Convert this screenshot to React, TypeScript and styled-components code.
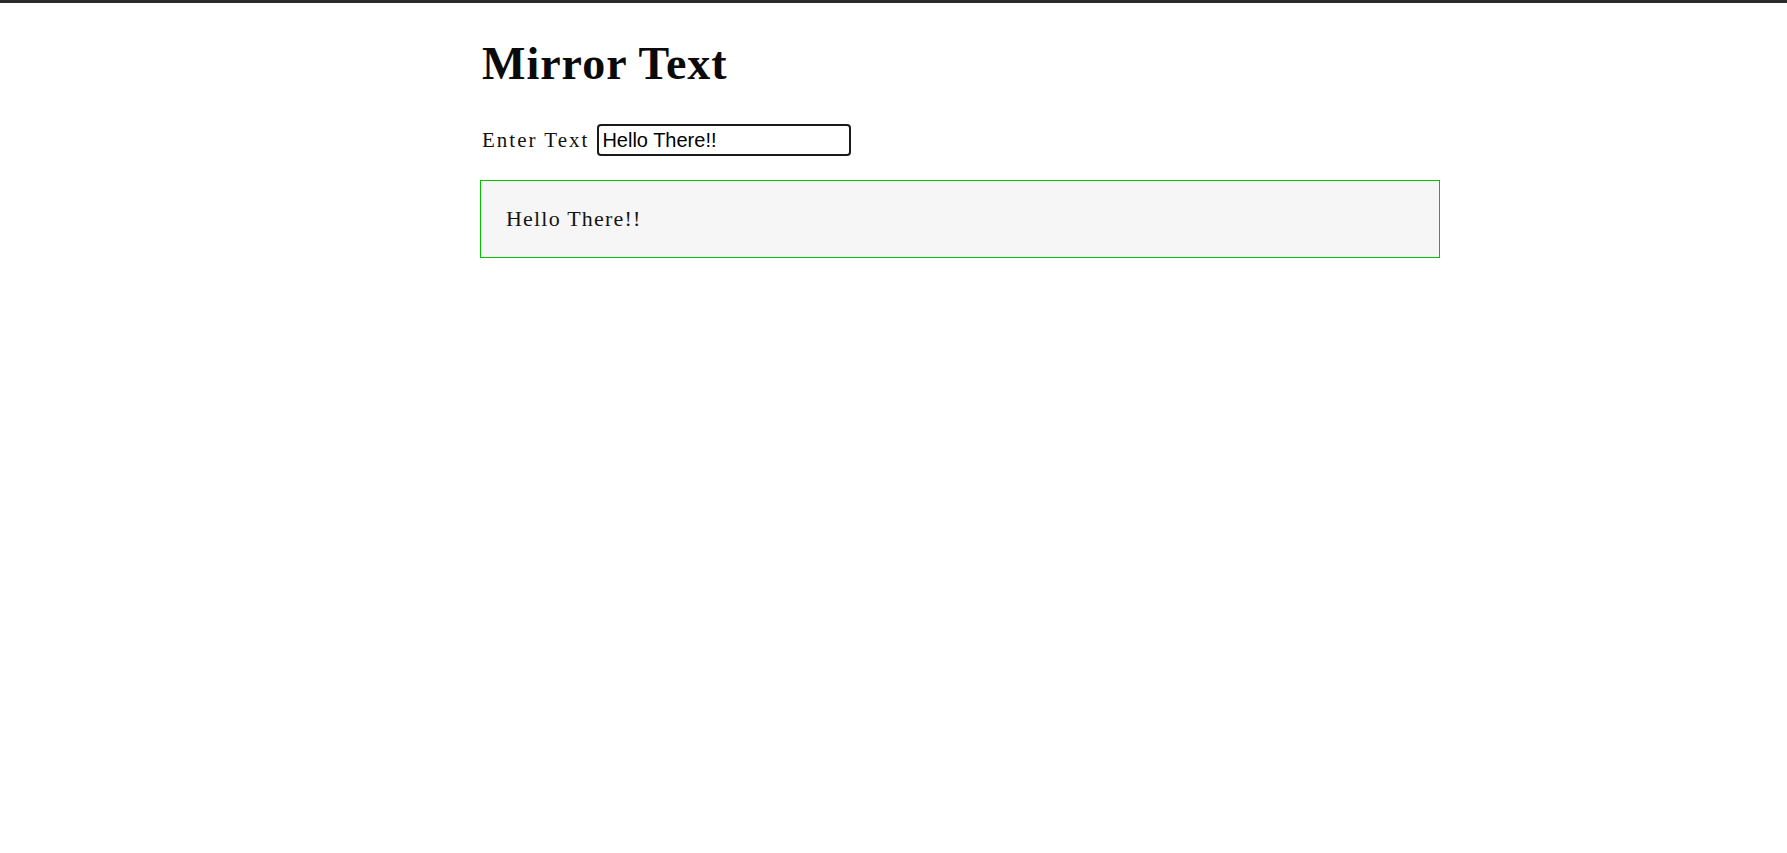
import React, { useState } from "react";
import styled, { createGlobalStyle } from "styled-components";

const GlobalStyle = createGlobalStyle`
  html, body {
    margin: 0;
    padding: 0;
    background: #ffffff;
  }
  body {
    border-top: 3px solid #2b2b2b;
    font-family: "Liberation Serif", "Times New Roman", serif;
    color: #111;
  }
`;

const Page = styled.main`
  display: flex;
  flex-direction: column;
  width: 960px;
  margin-left: 480px;
`;

const Title = styled.h1`
  margin: 38px 0 0 2px;
  font-size: 46px;
  line-height: 1;
  font-weight: 700;
  letter-spacing: 1px;
  color: #0a0a0a;
`;

const InputRow = styled.div`
  display: flex;
  align-items: center;
  gap: 8px;
  margin-top: 37px;
  padding-left: 2px;
`;

const Label = styled.label`
  font-size: 21px;
  letter-spacing: 2px;
  color: #111;
`;

const TextInput = styled.input`
  box-sizing: border-box;
  width: 254px;
  height: 32px;
  padding: 0 3px;
  border: 2px solid #1a1a1a;
  border-radius: 4px;
  font-family: "Liberation Sans", Arial, sans-serif;
  font-size: 20px;
  color: #000;
  outline: none;
`;

const Output = styled.div`
  box-sizing: border-box;
  display: flex;
  align-items: center;
  height: 78px;
  margin-top: 24px;
  padding: 0 25px;
  background: #f6f6f6;
  border: 1px solid #00c400;
  font-size: 22px;
  letter-spacing: 1.2px;
  color: #151515;
`;

export default function App() {
  const [text, setText] = useState("Hello There!!");
  return (
    <>
      <GlobalStyle />
      <Page>
        <Title>Mirror Text</Title>
        <InputRow>
          <Label htmlFor="mirror">Enter Text</Label>
          <TextInput
            id="mirror"
            value={text}
            onChange={(e) => setText(e.target.value)}
          />
        </InputRow>
        <Output>{text}</Output>
      </Page>
    </>
  );
}
